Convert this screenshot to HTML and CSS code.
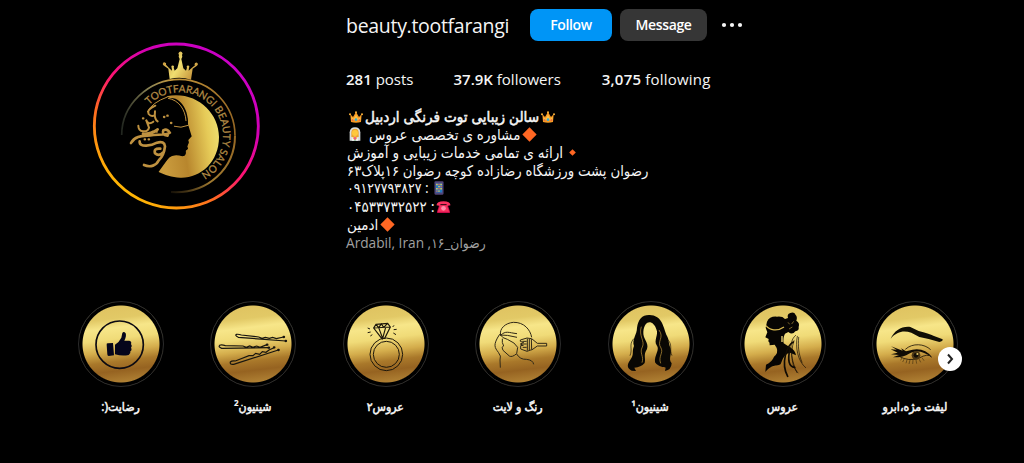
FILE: index.html
```html
<!DOCTYPE html>
<html lang="en">
<head>
  <meta charset="UTF-8" />
  <meta name="viewport" content="width=device-width, initial-scale=1.0" />
  <title>beauty.tootfarangi</title>
  <link rel="stylesheet" href="styles.css">
</head>
<body>
  <svg class="defs" width="0" height="0">
    <defs>
      <linearGradient id="ring" x1="0.85" y1="0.1" x2="0.2" y2="0.95">
        <stop offset="0" stop-color="#c900c8" />
        <stop offset="0.25" stop-color="#d300b4" />
        <stop offset="0.5" stop-color="#ff1470" />
        <stop offset="0.7" stop-color="#ff6a20" />
        <stop offset="1" stop-color="#ffc000" />
      </linearGradient>
      <linearGradient id="moon" x1="0" y1="0.3" x2="1" y2="0.1">
        <stop offset="0" stop-color="#c99b3d" />
        <stop offset="0.35" stop-color="#b8862d" />
        <stop offset="0.75" stop-color="#e6cb58" />
        <stop offset="1" stop-color="#f0e477" />
      </linearGradient>
      <linearGradient id="tiara" x1="0" y1="0.3" x2="1" y2="0.8">
        <stop offset="0" stop-color="#c8953a" />
        <stop offset="0.45" stop-color="#f0de70" />
        <stop offset="1" stop-color="#c08a34" />
      </linearGradient>
      <linearGradient id="arc" gradientUnits="userSpaceOnUse" x1="108" y1="290" x2="450" y2="290">
        <stop offset="0" stop-color="#20251f" />
        <stop offset="0.25" stop-color="#8d8656" />
        <stop offset="0.45" stop-color="#c89a3c" />
        <stop offset="1" stop-color="#966724" />
      </linearGradient>
      <linearGradient id="arc-end" gradientUnits="userSpaceOnUse" x1="450" y1="290" x2="258" y2="470">
        <stop offset="0" stop-color="#966724" />
        <stop offset="0.6" stop-color="#a07a30" />
        <stop offset="1" stop-color="#181208" />
      </linearGradient>
      <path id="name-arc" d="M192 210 A130 130 0 0 1 414 302 A130 130 0 0 1 338 420" />
      <symbol id="crown" viewBox="0 0 42 36">
        <path fill="#f79b24" d="M4 10 L12 18 L21 3 L30 18 L38 10 L36 33 Q21 37 6 33Z" />
        <path fill="#ffbf45" d="M7 18 L14 23 L21 11 L28 23 L35 18 L34 27 H8Z" />
        <circle cx="21" cy="4" r="3" fill="#ffb43b" /><circle cx="3" cy="10" r="3" fill="#ffb43b" /><circle cx="39" cy="10" r="3" fill="#ffb43b" />
        <circle cx="21" cy="26" r="4" fill="#3ca7c8" /><circle cx="11" cy="27" r="2.5" fill="#e44857" /><circle cx="31" cy="27" r="2.5" fill="#e44857" />
      </symbol>
      <symbol id="diamond" viewBox="0 0 42 42"><path fill="#ff6723" d="M21 1 L41 21 L21 41 L1 21Z" /></symbol>
    </defs>
  </svg>

  <main class="profile">
    <header class="top">
      <svg class="avatar" viewBox="0 0 540 540">
        <circle cx="274" cy="273" r="246" fill="none" stroke="url(#ring)" stroke-width="8.5" />
        <path fill="url(#tiara)" d="M254 132 L250 101 L237 92 A5 5 0 1 1 243 89 L252 99 L261 107 L260 98 A4 4 0 1 1 266 98 L269 107 L277 100 L284 72 L281 65 L282 60 A6 6 0 1 1 291 60 L292 65 L289 72 L295 100 L303 107 L306 98 A4 4 0 1 1 312 98 L311 107 L320 99 L330 91 A5 5 0 1 1 336 92 L323 101 L318 134 Q286 124 254 132Z" />
        <path fill="none" stroke="url(#arc)" stroke-width="5" d="M110 300 C110 210 190 133 284 133 C380 135 450 214 450 302" />
        <path fill="none" stroke="url(#arc-end)" stroke-width="6" d="M450 302 C450 398 370 478 258 471" />
        <text class="logo-name"><textPath href="#name-arc" textLength="444" lengthAdjust="spacingAndGlyphs">TOOTFARANGI BEAUTY SALON</textPath></text>
        <path fill="url(#moon)" d="M244 184 C330 166 402 230 402 306 C402 382 346 430 286 428 C260 427 239 419 221 411 C226 390 240 380 256 365 Q270 354 296 363 Q304 358 302 347 L309 341 L306 334 L311 322 L308 314 L319 304 L309 284 L309 266 Q306 210 244 184Z" />
        <path d="M208 215 C230 190 262 180 285 200 C303 216 310 244 309 268 L320 304 L310 315 L311 324 L307 334 L308 342 L301 347 Q305 362 292 364 Q270 357 253 366 L220 412 Q235 360 238 300Z" />
        <g fill="none" stroke="#be9140" stroke-linecap="round">
          <path stroke-width="3" d="M247 186 Q202 202 187 230 M250 190 C281 195 301 223 303 257 M268 274 Q287 281 310 271" />
          <path stroke-width="6" d="M211 212 Q184 224 191 237 Q198 246 209 241 M210 229 Q207 253 218 259 M160 272 C160 294 188 293 192 278 L183 254 Q190 272 205 260" />
          <path stroke-width="8" d="M138 324 C150 300 177 303 196 301 C218 298 244 301 254 293 Q246 280 235 286 Q229 299 248 302 M174 296 Q199 298 218 283 M164 319 C162 340 202 331 216 323 Q238 317 240 334 Q237 361 222 375 C214 391 197 399 177 390 M226 341 Q205 339 210 355 Q222 366 237 350" />
          <path stroke-width="7" d="M247 242 h1 M237 246 h1 M258 264 h1 M202 291 h1 M214 290 h1 M179 313 h1 M191 313 h1 M174 250 h1" />
        </g>
      </svg>

      <section class="info">
        <div class="title-row">
          <h1>beauty.tootfarangi</h1>
          <button class="btn follow">Follow</button>
          <button class="btn message">Message</button>
          <svg class="more" viewBox="0 0 22 6" fill="#f5f5f5"><circle cx="3" cy="3" r="2.1" /><circle cx="11" cy="3" r="2.1" /><circle cx="19" cy="3" r="2.1" /></svg>
        </div>

        <ul class="stats">
          <li><b>281</b> posts</li>
          <li><b>37.9K</b> followers</li>
          <li class="following"><b>3,075</b> following</li>
        </ul>

        <div class="bio">
          <p class="name" dir="rtl"><svg class="emoji crown"><use href="#crown" /></svg><span>سالن زیبایی توت فرنگی اردبیل</span><svg class="emoji crown"><use href="#crown" /></svg></p>
          <p dir="rtl"><svg class="emoji gem"><use href="#diamond" /></svg><span>مشاوره ی تخصصی عروس</span><svg class="emoji bride" viewBox="0 0 36 42">
            <path fill="#d9dddf" d="M2 41 V16 Q3 1 18 1 Q33 1 34 16 V41Z" />
            <path fill="#eda42f" d="M7 30 V15 Q8 5 18 5 Q28 5 29 15 V30Z" />
            <circle cx="18" cy="18" r="9" fill="#ffc83d" /><path fill="#f4f4f4" d="M8 41 Q9 29 18 29 Q27 29 28 41Z" />
            <path fill="#ffc83d" d="M11 30 h14 l-4 8 h-6z" /><circle cx="18" cy="34" r="4" fill="#ee5b86" /><path fill="#45a55e" d="M15 38 h6 l-3 4z" />
          </svg></p>
          <p class="service" dir="rtl"><svg class="emoji small-gem"><use href="#diamond" /></svg><span>ارائه ی تمامی خدمات زیبایی و آموزش</span></p>
          <p class="address" dir="rtl"><span>رضوان پشت ورزشگاه رضازاده کوچه رضوان ۱۶پلاک۶۳</span></p>
          <p class="mobile-line" dir="rtl"><svg class="emoji mobile" viewBox="0 0 28 40">
            <rect x="1" y="1" width="26" height="38" rx="3" fill="#514579" /><rect x="5" y="7" width="18" height="26" fill="#257cc0" />
            <path fill="#f8cd48" d="M6 8h4v4H6zM18 8h4v4h-4zM12 14h4v4h-4zM6 20h4v4H6zM18 20h4v4h-4zM12 27h4v4h-4z" /><path fill="#ed6845" d="M12 8h4v4h-4zM18 14h4v4h-4zM12 20h4v4h-4zM6 27h4v4H6z" />
          </svg><span>: ۰۹۱۲۷۷۹۳۸۲۷</span></p>
          <p dir="rtl"><svg class="emoji phone" viewBox="0 0 44 36">
            <path fill="#ca0b4a" d="M9 13 H35 L41 31 V36 H3 V31Z" /><path fill="#f8315f" d="M1 13 Q2 1 22 1 Q42 1 43 13 L32 15 L31 10 H13 L12 15Z" />
            <path fill="#f8315f" d="M12 13 H32 L39 32 H5Z" /><circle cx="22" cy="22" r="7" fill="#ff8ba8" />
          </svg><span>: ۰۴۵۳۳۷۳۲۵۲۲</span></p>
          <p dir="rtl"><svg class="emoji gem"><use href="#diamond" /></svg><span>ادمین</span></p>
          <p class="place"><span>Ardabil, Iran ,رضوان_۱۶</span></p>
        </div>
      </section>
    </header>

    <section class="highlights">
      <div class="story">
        <div class="cover"><svg viewBox="28 21 252 252">
          <circle cx="150" cy="149" r="71" fill="none" stroke="#0c0a12" stroke-width="5" />
          <path fill="#05051b" d="M111 149 Q110 145 115 145 L130 144 L133 181 L117 183 Q113 183 113 178Z M136 149 Q149 141 155 128 L158 114 Q162 107 168 115 Q171 124 164 137 H179 Q187 139 184 147 Q189 153 184 158 Q188 165 182 169 Q184 176 177 180 Q157 184 136 178Z" />
        </svg></div>
        <h2 dir="rtl">رضایت(:</h2>
      </div>
      <div class="story">
        <div class="cover"><svg viewBox="34 21 252 252" fill="none" stroke="#17150f" stroke-width="3.5" stroke-linecap="round">
          <path d="M258 138 L116 127 Q104 121 111 118 Q116 117 125 120 L177 126 L187 130 L197 127 L209 130 L219 127 L230 131 L252 126" />
          <path d="M207 158 L66 160 Q55 156 60 151 Q65 148 77 152 L130 153 L140 157 L150 153 L160 157 L171 153 L181 157 L202 149" />
          <path d="M236 165 L102 208 Q90 210 92 201 Q96 197 107 198 L148 182 L160 182 L168 175 L180 178 L188 170 L199 172 L208 165 L223 158" />
          <g stroke-width="7"><path d="M258 138h1M252 126h1M207 158h1M202 149h1M236 165h1M223 157h1" /></g>
        </svg></div>
        <h2 dir="rtl">شینیون²</h2>
      </div>
      <div class="story">
        <div class="cover"><svg viewBox="41 21 252 252" fill="none" stroke="#1d170b" stroke-width="3">
          <circle cx="168" cy="178" r="49" /><circle cx="168" cy="178" r="39" />
          <path stroke-width="3.5" d="M137 88 L172 85 L180 96 L163 130 L154 130 L130 99Z M130 99 L180 96 M137 88 L145 98 L153 87 L160 97 L172 85 M145 98 L157 130 L166 97" />
          <path d="M112 99 L119 102 M112 113 L121 111 M120 123 L126 119 M191 91 L187 96 M199 103 L190 104 M197 119 L189 114" />
        </svg></div>
        <h2 dir="rtl">عروس۲</h2>
      </div>
      <div class="story">
        <div class="cover"><svg viewBox="48 21 252 252" fill="none" stroke="#302817" stroke-width="3" stroke-linejoin="round">
          <path d="M122 121 C117 101 136 84 160 82 C192 81 211 104 215 127 M122 121 C137 106 145 113 171 116 M120 120 Q140 119 171 127 M119 117 Q128 131 142 133 Q166 143 173 157 L170 176 Q156 188 148 183 L129 166 L126 157 L131 153 Q125 143 127 131 M119 118 C97 151 105 158 115 172 Q125 183 120 195 L121 218 M170 177 Q180 194 199 193 Q219 195 221 208" />
          <path d="M181 135 L201 129 L214 131 L215 164 L201 169 L182 162 L182 152 L190 151 L181 147 L191 143 L181 139Z M187 139 H200 M188 147 H200 M188 157 H200 M202 131 V167 M208 132 V165 M215 131 L232 145 H260 V153 H232 L215 165" />
        </svg></div>
        <h2 dir="rtl">رنگ و لایت</h2>
      </div>
      <div class="story">
        <div class="cover"><svg viewBox="55 21 252 252">
          <path fill="#090704" d="M177 60 C155 59 143 72 139 98 C139 119 123 133 130 153 C122 172 132 177 119 194 C107 211 110 220 123 227 L136 228 L131 218 Q151 217 162 204 C166 188 157 181 169 162 C176 143 156 132 158 110 C160 91 168 82 176 82 C185 82 193 90 197 103 C205 118 188 137 198 151 C209 164 190 181 193 202 C204 217 219 216 225 218 L223 228 Q242 225 243 205 C231 190 246 178 239 158 C232 140 236 133 227 119 C216 88 212 62 177 60Z" />
          <g fill="none" stroke="#c89b3c" stroke-width="2"><path d="M152 95 C143 123 164 139 155 156 C145 174 161 184 154 203 M205 105 C222 128 197 139 211 159 C219 174 202 184 210 205" /></g>
          <g fill="none" stroke="#171006" stroke-width="2"><path d="M129 131 C113 151 127 161 118 182 M232 134 C247 153 235 164 244 182" /></g>
        </svg></div>
        <h2 dir="rtl">شینیون¹</h2>
      </div>
      <div class="story">
        <div class="cover"><svg viewBox="46 21 252 252">
          <path fill="#070503" d="M124 80 Q132 63 154 65 Q170 63 178 72 L187 69 Q183 57 194 54 Q206 50 210 60 Q216 66 212 77 Q223 83 219 96 Q221 107 209 109 Q200 121 188 111 L178 116 Q171 129 174 145 L195 158 Q209 166 211 181 L193 173 Q175 175 165 207 C155 216 141 204 119 231 L121 209 Q139 201 145 185 Q159 174 153 159 L147 149 L132 151 Q133 142 128 139 L129 132 L119 127 L125 112 L120 98Z" />
          <path fill="none" stroke="#d9b950" stroke-width="4" d="M121 92 C132 106 155 110 175 96" />
          <path fill="none" stroke="#efd77a" stroke-width="4" d="M169 123 V141" />
          <path fill="none" stroke="#b89740" stroke-width="2" d="M187 82 L192 88 M204 79 L198 87 M190 102 L200 96" />
          <g fill="none" stroke="#100b04" stroke-linecap="round">
            <path stroke-width="5" d="M203 141 C184 151 164 204 186 244 M193 160 Q181 215 207 217" />
            <path stroke-width="2" d="M210 121 C178 145 208 222 214 233 M215 124 C208 155 216 199 240 218 M205 137 C191 177 201 224 217 233 M219 127 C217 155 218 174 229 202" />
          </g>
        </svg></div>
        <h2 dir="rtl">عروس</h2>
      </div>
      <div class="story">
        <div class="cover"><svg viewBox="41 21 252 252">
          <path fill="#100e05" d="M94 131 C105 107 127 93 153 96 L178 108 Q208 115 224 123 L250 133 Q251 139 240 141 L208 132 L180 126 L156 113 C131 106 113 110 94 131Z" />
          <path fill="none" stroke="#201708" stroke-width="2.5" d="M138 163 C160 143 195 146 214 164 M119 184 Q148 200 178 190 Q207 173 217 187" />
          <path fill="#100b05" d="M95 154 L112 164 L94 163 L115 173 L95 178 L119 180 L101 187 Q135 187 149 176 C170 165 191 168 218 187 Q197 158 160 164 L140 169 L125 160 L130 167Z" />
          <circle cx="170" cy="181" r="13" fill="#4c3715" /><circle cx="170" cy="181" r="7" fill="#120d06" /><circle cx="174" cy="177" r="3" fill="#e5cc68" />
          <path stroke="#493411" stroke-width="2" d="M128 188 L124 196 M135 191 L130 201 M143 194 L140 205 M152 195 L149 207 M161 195 L160 207 M170 195 L172 206 M179 192 L184 202 M188 188 L194 197" />
        </svg>
          <button class="next"><svg viewBox="0 0 24 24" fill="none" stroke="#222" stroke-width="2"><path d="M10 7.5 L14 12 L10 16.5" /></svg></button>
        </div>
        <h2 dir="rtl">لیفت مژه،ابرو</h2>
      </div>
    </section>
  </main>
</body>
</html>
```
FILE: styles.css
```css
* {
  box-sizing: border-box;
}

body {
  margin: 0;
  background: #000;
  color: #f5f5f5;
  font-family: "Open Sans", "DejaVu Sans Condensed", "DejaVu Sans", sans-serif;
  font-size: 15px;
  overflow: hidden;
}

h1, h2, p, ul {
  margin: 0;
  padding: 0;
  font-weight: 400;
}

.defs {
  position: absolute;
}

.profile {
  height: 463px;
}

.top {
  display: flex;
  height: 301px;
  padding-left: 85px;
}

.avatar {
  width: 180px;
  height: 180px;
  margin-top: 35px;
  flex: none;
}

.logo-name {
  font-family: Lato, sans-serif;
  font-size: 31px;
  fill: #b38b45;
  stroke: #b38b45;
  stroke-width: 0.8;
}

.info {
  padding: 9px 0 0 81px;
}

.title-row {
  display: flex;
  align-items: center;
  height: 32px;
}

h1 {
  width: 184px;
  font-size: 19.5px;
  letter-spacing: -0.3px;
  line-height: 33px;
  white-space: nowrap;
}

.btn {
  height: 32px;
  border: none;
  border-radius: 8px;
  color: #fff;
  font: 600 14px "Open Sans", sans-serif;
  letter-spacing: -0.35px;
  padding: 0 0 2px;
}

.follow {
  width: 82px;
  background: #0095f6;
}

.message {
  width: 87px;
  margin-left: 8px;
  background: #363636;
}

.more {
  width: 22px;
  height: 6px;
  margin-left: 14px;
}

.stats {
  display: flex;
  gap: 40px;
  margin-top: 27px;
  list-style: none;
  line-height: 22px;
  white-space: nowrap;
}

.stats b {
  font-weight: 600;
}

.following {
  margin-left: 1px;
  letter-spacing: 0.2px;
}

.bio {
  margin-top: 17px;
  padding-left: 1px;
}

.bio p {
  display: flex;
  align-items: center;
  width: max-content;
  height: 18px;
  line-height: 18px;
  white-space: nowrap;
}

.bio .name {
  font-size: 15.1px;
  -webkit-text-stroke: 0.5px #f5f5f5;
}

.bio .service {
  font-size: 15.2px;
}

.bio .address {
  font-size: 14.75px;
}

.bio .mobile-line {
  font-size: 14px;
}

.emoji {
  flex: none;
}

.crown {
  width: 14px;
  height: 12px;
  margin: 2px 2px 0;
}

.gem {
  width: 15px;
  height: 15px;
  margin-left: 2px;
}

.small-gem {
  width: 7px;
  height: 7px;
  margin: 0 4px 0 6px;
}

.bride {
  width: 12px;
  height: 14px;
  margin: 0 8px 0 2px;
}

.mobile {
  width: 10px;
  height: 14px;
  margin-left: 5px;
}

.phone {
  width: 15px;
  height: 12px;
  margin: 2px 0 0 1px;
}

.bio .place {
  height: 20px;
  margin-left: -1px;
  line-height: 20px;
  color: #a0a0a0;
  font-size: 13.7px;
}

.highlights {
  display: flex;
  gap: 46.4px;
  padding-left: 78px;
}

.story {
  width: 86px;
  flex: none;
  display: flex;
  flex-direction: column;
  align-items: center;
}

.cover {
  position: relative;
  width: 86px;
  height: 86px;
  border: 1px solid #2b2b2b;
  border-radius: 50%;
  background: radial-gradient(circle, transparent 38px, #000 39px), linear-gradient(173deg, #dfc260 6%, #e2c966 22%, #f7e689 32%, #f0db78 44%, #d4ad4c 57%, #a9782a 68%, #966321 78%, #b98c3b 96%);
}

.cover > svg {
  display: block;
  width: 84px;
  height: 84px;
}

.story h2 {
  margin: 11px 1px 0 0;
  font-size: 12.2px;
  line-height: 18px;
  white-space: nowrap;
  -webkit-text-stroke: 0.5px #f5f5f5;
}

.next {
  position: absolute;
  left: 65px;
  top: 45px;
  width: 24px;
  height: 24px;
  padding: 0;
  border: none;
  border-radius: 50%;
  background: #fff;
}

.next svg {
  display: block;
  width: 24px;
  height: 24px;
}
```
